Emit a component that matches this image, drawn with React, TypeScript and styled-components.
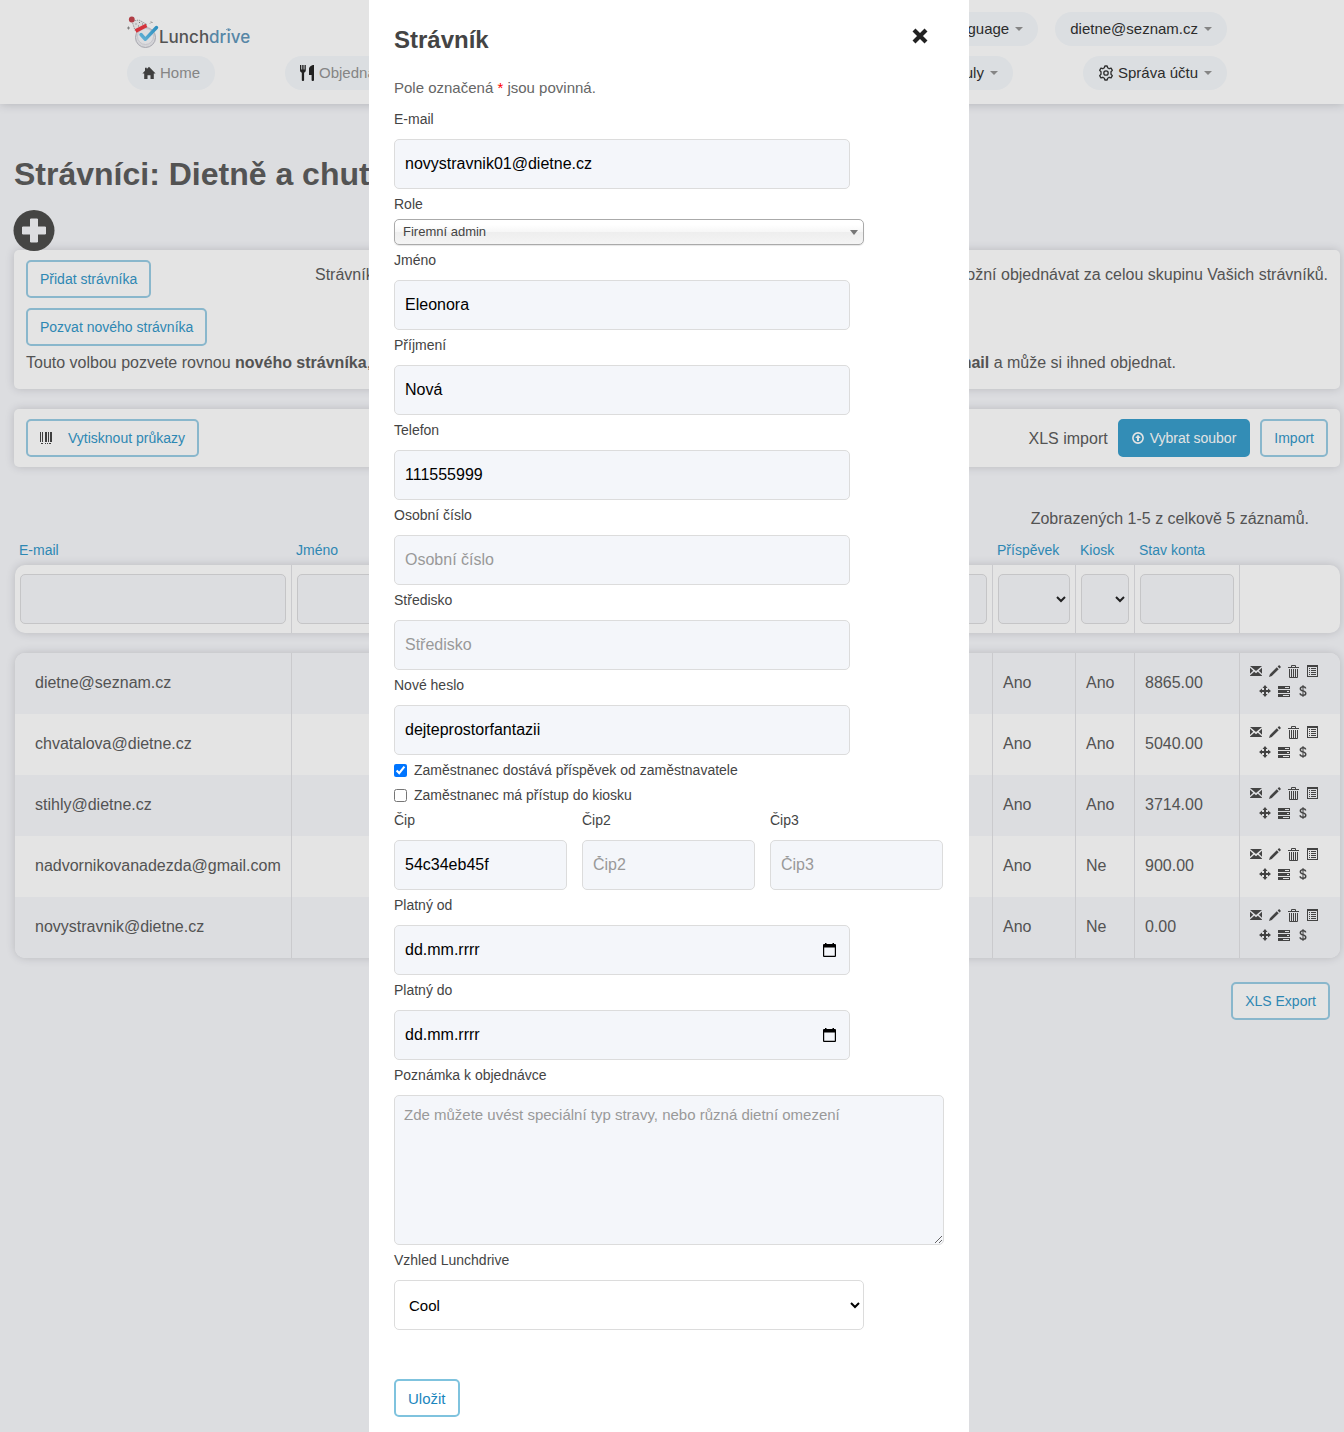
import React from "react";
import styled, { createGlobalStyle } from "styled-components";

const GlobalStyle = createGlobalStyle`
  *, *::before, *::after { box-sizing: border-box; }
  body {
    margin: 0;
    background: #f6f7fb;
    color: #5a5a5a;
    font-family: "Liberation Sans", Arial, sans-serif;
    font-size: 16px;
  }
  button, input, select, textarea { font-family: inherit; }
  h1, h2, p { margin: 0; }
`;

/* ---------- page ---------- */

const Header = styled.header`
  background: #fff;
  box-shadow: 0 0 10px rgba(0, 0, 0, 0.2);
  padding: 12px 4px 14px 14px;
`;

const HeaderInner = styled.div`
  max-width: 1100px;
  margin: 0 auto;
  display: flex;
  flex-direction: column;
  gap: 10px;
`;

const HeaderRow = styled.div<{ $gap: number }>`
  display: flex;
  height: 34px;
  gap: ${(p) => p.$gap}px;
`;

const LogoLink = styled.a`
  display: block;
  margin-right: auto;
  svg { display: block; overflow: visible; }
`;

const Pill = styled.a<{ $muted?: boolean }>`
  display: flex;
  align-items: center;
  gap: 4px;
  height: 34px;
  padding: 0 15px 1px;
  border-radius: 17px;
  background: #f5f9fc;
  color: ${(p) => (p.$muted ? "#939393" : "#2e2e2e")};
  font-size: 15px;
  white-space: nowrap;
  text-decoration: none;
`;

const Caret = styled.span`
  margin-left: 2px;
  border: 4px solid transparent;
  border-top-color: #939393;
  border-bottom: 0;
`;

const NavMiddle = styled.div`
  flex: 1;
  display: flex;
  justify-content: space-between;
`;

const Main = styled.main`
  padding: 50px 4px 40px 14px;
`;

const PageTitle = styled.h1`
  font-size: 32px;
  line-height: 40px;
  white-space: nowrap;
`;

const AddButton = styled.button`
  display: block;
  margin-top: 16px;
  padding: 0;
  border: 0;
  background: none;
  svg { display: block; overflow: visible; }
`;

const Panel = styled.section`
  background: #fff;
  border-radius: 5px;
  box-shadow: 0 0 10px rgba(0, 0, 0, 0.16);
  padding: 10px 12px;
  & + & { margin-top: 20px; }
`;

const PanelRow = styled.div`
  display: flex;
  justify-content: space-between;
  align-items: flex-start;
`;

const Stack = styled.div`
  display: flex;
  flex-direction: column;
  align-items: flex-start;
  gap: 10px;
`;

const SplitText = styled.p<{ $inset?: number }>`
  display: flex;
  flex: 1;
  justify-content: space-between;
  line-height: 30px;
  white-space: nowrap;
  padding-right: ${(p) => p.$inset ?? 0}px;
`;

const AddHint = styled(SplitText)`
  max-width: 1013px;
`;

const InviteHint = styled(SplitText)`
  padding-top: 2px;
  padding-bottom: 1px;
`;

const Button = styled.button<{ $primary?: boolean }>`
  display: inline-flex;
  align-items: center;
  gap: 6px;
  height: 38px;
  padding: 0 12px;
  border: 2px solid ${(p) => (p.$primary ? "#369dcb" : "#98cce4")};
  border-radius: 5px;
  background: ${(p) => (p.$primary ? "#369dcb" : "#fff")};
  color: ${(p) => (p.$primary ? "#fff" : "#3096c8")};
  font-size: 14px;
  white-space: nowrap;
`;

const PrintButton = styled(Button)`
  gap: 16px;
`;

const ImportGroup = styled.div`
  display: flex;
  align-items: center;
  gap: 10px;
  line-height: 22px;
  span { padding-top: 2px; }
`;

const Summary = styled.p`
  margin-top: 40px;
  padding: 1px 31px 0 0;
  text-align: right;
  line-height: 22px;
`;

const Table = styled.table`
  display: block;
  padding-left: 1px;
  tr {
    display: grid;
    grid-template-columns: 277px repeat(3, 1fr) 83px 59px 105px 100px;
  }
`;

const TableHead = styled.thead`
  display: block;
`;

const LabelCell = styled.th`
  padding: 10px 4px 5px;
  font-size: 14px;
  font-weight: normal;
  line-height: 20px;
  text-align: left;
  a { color: #3096c8; text-decoration: none; }
`;

const FilterRow = styled.tr`
  height: 68px;
  background: #fff;
  border-radius: 10px;
  box-shadow: 0 0 10px rgba(0, 0, 0, 0.16);
`;

const FilterCell = styled.td`
  padding: 9px 5px;
  border-right: 1px solid #e2e2e5;
  &:last-child { border-right: 0; }
`;

const FilterInput = styled.input`
  width: 100%;
  height: 50px;
  border: 1px solid #dcdcde;
  border-radius: 5px;
  background: #f6f7fb;
`;

const FilterSelect = styled.select`
  width: 100%;
  height: 50px;
  border: 1px solid #dcdcde;
  border-radius: 5px;
  background: #f6f7fb;
  color: #222;
  font-size: 15px;
`;

const TableBody = styled.tbody`
  display: block;
  margin-top: 20px;
  border-radius: 10px;
  overflow: hidden;
  background: #fff;
  box-shadow: 0 0 10px rgba(0, 0, 0, 0.16);
  tr:nth-child(odd) { background: #f6f7fb; }
`;

const Cell = styled.td<{ $wide?: boolean }>`
  display: flex;
  align-items: center;
  height: 61px;
  padding: 0 0 2px ${(p) => (p.$wide ? 20 : 10)}px;
  border-right: 1px solid #e2e2e5;
`;

const ActionCell = styled.td`
  display: flex;
  flex-wrap: wrap;
  justify-content: center;
  align-content: flex-start;
  column-gap: 7px;
  padding: 8px 17px 0 5px;
`;

const IconButton = styled.button`
  width: 12px;
  height: 20px;
  padding: 0;
  border: 0;
  background: none;
  color: #484848;
  display: flex;
  align-items: center;
  justify-content: center;
  svg { flex: none; display: block; }
`;

const ExportRow = styled.div`
  display: flex;
  justify-content: flex-end;
  margin-top: 24px;
  padding-right: 10px;
`;

/* ---------- dialog ---------- */

const Overlay = styled.div`
  position: fixed;
  inset: 0;
  z-index: 10;
  overflow: auto;
  display: flex;
  justify-content: center;
  align-items: flex-start;
  padding-right: 6px;
  background: rgba(30, 30, 30, 0.12);
`;

const Dialog = styled.div`
  width: 600px;
  max-width: 100%;
  min-height: 100%;
  padding: 24px 25px 15px;
  background: #fff;
  color: #444;
`;

const DialogHead = styled.div`
  display: flex;
  justify-content: space-between;
  align-items: flex-start;
  padding-right: 16px;
`;

const DialogTitle = styled.h2`
  padding-top: 1px;
  font-size: 24px;
  line-height: 30px;
`;

const CloseButton = styled.button`
  padding: 4px 0;
  border: 0;
  background: none;
  color: #222;
  svg { display: block; }
`;

const Note = styled.p`
  margin-top: 23px;
  margin-bottom: 6px;
  font-size: 15px;
  line-height: 20px;
  color: #666;
  span { color: #f00; }
`;

const Form = styled.form`
  display: flex;
  flex-direction: column;
  align-items: flex-start;
`;

const Field = styled.div<{ $width: number }>`
  width: ${(p) => p.$width}px;
  max-width: 100%;
`;

const Label = styled.label<{ $tight?: boolean }>`
  display: block;
  padding: 5px 0 ${(p) => (p.$tight ? 5 : 10)}px;
  font-size: 14px;
  line-height: 20px;
`;

const Input = styled.input`
  display: block;
  width: 100%;
  height: 50px;
  padding: 0 10px;
  border: 1px solid #dcdcdc;
  border-radius: 5px;
  background: #f4f6fa;
  color: #000;
  font-size: 16px;
  &::placeholder { color: #999; opacity: 1; }
`;

const DateInput = styled(Input)`
  &::placeholder { color: #000; }
`;

const Control = styled.div`
  position: relative;
`;

const CalendarButton = styled.button`
  position: absolute;
  top: 17px;
  right: 14px;
  padding: 0;
  border: 0;
  background: none;
  svg { display: block; }
`;

const TextArea = styled.textarea`
  display: block;
  width: 100%;
  height: 150px;
  padding: 10px 9px;
  border: 1px solid #dcdcdc;
  border-radius: 5px;
  background: #f4f6fa;
  font-size: 15px;
  &::placeholder { color: #999; opacity: 1; }
`;

const RoleSelect = styled.select`
  appearance: none;
  display: block;
  width: 100%;
  height: 26px;
  padding: 0 8px 2px;
  border: 1px solid #aaa;
  border-radius: 5px;
  background: linear-gradient(#fff 20%, #f6f6f6 50%, #eee 52%, #f4f4f4 100%);
  box-shadow: 0 1px 1px rgba(0, 0, 0, 0.1);
  color: #444;
  font-size: 13px;
`;

const RoleArrow = styled.span`
  position: absolute;
  top: 11px;
  right: 6px;
  border: 4px solid transparent;
  border-top: 5px solid #777;
  border-bottom: 0;
  pointer-events: none;
`;

const ThemeSelect = styled.select`
  display: block;
  width: 100%;
  height: 50px;
  padding: 0 10px;
  border: 1px solid #dcdcdc;
  border-radius: 5px;
  background: #fff;
  color: #000;
  font-size: 15px;
`;

const CheckRow = styled.label`
  display: flex;
  align-items: center;
  gap: 7px;
  padding-top: 5px;
  font-size: 14px;
  line-height: 20px;
  input { margin: 0; width: 13px; height: 13px; accent-color: #0075ff; }
`;

const ChipRow = styled.div`
  display: flex;
  gap: 15px;
`;

const Submit = styled(Button)`
  margin-top: 49px;
  border-color: #7fc3de;
  color: #1a86bd;
  font-size: 15px;
`;

/* ---------- drawings ---------- */

const Logo = () => (
  <svg width="122" height="34" viewBox="0 0 122 34" role="img" aria-label="Lunchdrive">
    <defs>
      <linearGradient id="tick" x1="0" y1="1" x2="1" y2="0">
        <stop offset="0" stopColor="#6cc5ee" />
        <stop offset="1" stopColor="#2f9fd6" />
      </linearGradient>
    </defs>
    <circle cx="18.5" cy="25.5" r="10" fill="#ededf1" stroke="#b9b9c2" strokeWidth="1" />
    <circle cx="18.5" cy="24.5" r="8" fill="#f7f7fa" stroke="#dcdce2" strokeWidth="1" />
    <path d="M5 9 L12 8 L20 12.5 L8 18.5 Z" fill="#f4f4f4" stroke="#8a8a8a" strokeWidth="0.8" strokeDasharray="1.4 1" />
    <path d="M8.5 12h1M12 10.500h1M11 14h1M15 12h1" stroke="#777" strokeWidth="0.9" />
    <path d="M8.600 19 L19.500 13.400" stroke="#ee3640" strokeWidth="3.8" />
    <circle cx="4.800" cy="7.500" r="2.900" fill="#c4434c" />
    <path d="M1.500 14.500v3M0 16h3M24 9.500l1.500 1.500M23 11.500l1-1" stroke="#8d8d8d" strokeWidth="1" />
    <path d="M14 22.500 L18.300 27.300 L29.500 15.500" fill="none" stroke="url(#tick)" strokeWidth="3.400" strokeLinecap="round" strokeLinejoin="round" />
    <text x="32" y="31" fontFamily="Inter, sans-serif" fontSize="17" fontWeight="500" fill="#5a5a5a">
      Lunch<tspan fill="#5e95b9">drive</tspan>
    </text>
    <path d="M99 17.800q2.500-2.500 5 0" fill="none" stroke="#7fb0cf" strokeWidth="1" />
  </svg>
);

const HomeIcon = () => (
  <svg width="14" height="14" viewBox="0 0 14 14" fill="#444">
    <path d="M7 .8 13.600 7.400H11.800V13H8.500V9.200H5.500V13H2.200V7.400H.4L3 4.800V1.800H4.800V3Z" />
  </svg>
);

const CutleryIcon = () => (
  <svg width="15" height="16" viewBox="0 0 15 16" fill="#222">
    <path d="M0 0h1.300v4.500h.9V0h1.400v4.500h.9V0h1.300v5.200c0 1.300-.8 2.100-1.700 2.500V15c0 1.300-2.300 1.300-2.300 0V7.700C.8 7.300 0 6.500 0 5.200ZM14 0v15c0 1.300-2.400 1.300-2.400 0v-5H9V4c0-2.300 2.400-4 5-4Z" />
  </svg>
);

const GearIcon = () => (
  <svg width="16" height="16" viewBox="0 0 24 24" fill="none" stroke="#333" strokeWidth="2" strokeLinejoin="round">
    <path d="M9.500 4.200 10.300 1.500h3.400l.8 2.700 2.300 1.400 2.800-.8 1.900 3.200-2 2.200v3.600l2 2.200-1.900 3.200-2.800-.8-2.300 1.400-.8 2.700h-3.400l-.8-2.700-2.300-1.400-2.800.8L2.500 16l2-2.200v-3.600l-2-2.200 1.900-3.200 2.800.8Z" />
    <circle cx="12" cy="12" r="3.300" />
  </svg>
);

const PlusIcon = () => (
  <svg width="40" height="40" viewBox="0 0 40 40">
    <circle cx="20" cy="20.500" r="20.500" fill="#4b4b49" />
    <path d="M16.500 9h7v8h8v7h-8v8h-7v-8h-8v-7h8Z" fill="#f6f7fb" stroke="#f6f7fb" strokeLinejoin="round" />
  </svg>
);

const BarcodeIcon = () => (
  <svg width="12" height="12" viewBox="0 0 12 12" fill="#444" shapeRendering="crispEdges">
    <path d="M0 0h1v10H0ZM2 0h1v10H2ZM5 0h2v10H5ZM8 0h1v10H8ZM10 0h2v10h-2ZM1 11h2v1H1ZM5 11h1v1H5ZM7 11h1v1H7ZM9 11h2v1H9Z" />
  </svg>
);

const UploadIcon = () => (
  <svg width="12" height="12" viewBox="0 0 12 12">
    <circle cx="6" cy="6" r="5.100" fill="none" stroke="#fff" strokeWidth="1.600" />
    <path d="M6 2.800 8.800 6H7v3H5V6H3.200Z" fill="#fff" />
  </svg>
);

const CloseIcon = () => (
  <svg width="16" height="16" viewBox="0 0 16 16" fill="none" stroke="currentColor" strokeWidth="4.200">
    <path d="M2 2 14 14M14 2 2 14" />
  </svg>
);

const CalendarIcon = () => (
  <svg width="13" height="15" viewBox="0 0 13 15" fill="#000">
    <path d="M2 1h1.500v1H9.500V1H11v1h1a1 1 0 0 1 1 1V14a1 1 0 0 1-1 1H1a1 1 0 0 1-1-1V3a1 1 0 0 1 1-1h1ZM1.200 5.500v8.300h10.600V5.500Z" fillRule="evenodd" />
  </svg>
);

const actionIcons: { label: string; icon: React.ReactNode }[] = [
  {
    label: "Poslat e-mail",
    icon: (
      <svg width="12" height="10" viewBox="0 0 12 10" fill="currentColor">
        <path d="M0 0h12L6 5ZM0 1.800 3.200 4.700 0 7.800ZM12 1.800V7.800L8.800 4.700ZM0 10V9.500L4.200 5.700 6 7.200 7.800 5.700 12 9.500V10Z" />
      </svg>
    ),
  },
  {
    label: "Upravit",
    icon: (
      <svg width="12" height="12" viewBox="0 0 12 12" fill="currentColor">
        <path d="M0 12 .9 9.200 7.800 2.300 9.700 4.200 2.800 11.100ZM8.600 1.500 10.100 0 12 1.900 10.500 3.400Z" />
      </svg>
    ),
  },
  {
    label: "Smazat",
    icon: (
      <svg width="12" height="13" viewBox="0 0 12 13" fill="none" stroke="currentColor">
        <path d="M0 2.500h11M3.500 2V.5h4V2" />
        <path d="M1.500 4v8.500h8V4M3.500 4v8M5.500 4v8M7.500 4v8" />
      </svg>
    ),
  },
  {
    label: "Detail",
    icon: (
      <svg width="12" height="12" viewBox="0 0 12 12" fill="currentColor" shapeRendering="crispEdges">
        <path d="M0 0h11v12H0ZM1 2v9h9V2Z" fillRule="evenodd" />
        <path d="M2 3h1v1H2ZM4 3h5v1H4ZM2 5h1v1H2ZM4 5h5v1H4ZM2 7h1v1H2ZM4 7h5v1H4ZM2 9h1v1H2ZM4 9h5v1H4Z" />
      </svg>
    ),
  },
  {
    label: "Přesunout",
    icon: (
      <svg width="12" height="12" viewBox="0 0 12 12" fill="currentColor">
        <path d="M6 0 8.500 3H7v2h2V3.500L12 6 9 8.500V7H7v2h1.500L6 12 3.500 9H5V7H3v1.500L0 6 3 3.500V5h2V3H3.500Z" />
      </svg>
    ),
  },
  {
    label: "Historie",
    icon: (
      <svg width="12" height="11" viewBox="0 0 12 11" fill="currentColor" shapeRendering="crispEdges">
        <path d="M0 0h12v3H0ZM7 1v1h4V1ZM0 4h12v3H0ZM9 5v1h2V5ZM0 8h12v3H0ZM5 9v1h6V9Z" fillRule="evenodd" />
      </svg>
    ),
  },
  {
    label: "Platby",
    icon: (
      <svg width="8" height="12" viewBox="0 0 8 12" fill="none" stroke="currentColor" strokeWidth="1.400">
        <path d="M6.600 3.600C6.600 2.400 5.500 1.800 4 1.800S1.300 2.500 1.300 3.700 2.300 5.500 4 5.900 6.800 7 6.800 8.400 5.600 10.200 4 10.200 1.100 9.500 1.100 8.200" />
        <path d="M4 0v12" strokeWidth="1" />
      </svg>
    ),
  },
];

/* ---------- data ---------- */

const diners = [
  { email: "dietne@seznam.cz", allowance: "Ano", kiosk: "Ano", balance: "8865.00" },
  { email: "chvatalova@dietne.cz", allowance: "Ano", kiosk: "Ano", balance: "5040.00" },
  { email: "stihly@dietne.cz", allowance: "Ano", kiosk: "Ano", balance: "3714.00" },
  { email: "nadvornikovanadezda@gmail.com", allowance: "Ano", kiosk: "Ne", balance: "900.00" },
  { email: "novystravnik@dietne.cz", allowance: "Ano", kiosk: "Ne", balance: "0.00" },
];

const columns: { title: string; filter: "text" | "select" | "none" }[] = [
  { title: "E-mail", filter: "text" },
  { title: "Jméno", filter: "text" },
  { title: "Příjmení", filter: "text" },
  { title: "Telefon", filter: "text" },
  { title: "Příspěvek", filter: "select" },
  { title: "Kiosk", filter: "select" },
  { title: "Stav konta", filter: "text" },
  { title: "", filter: "none" },
];

type TextFieldProps = {
  id: string;
  label: string;
  value?: string;
  type?: string;
  width?: number;
};

const TextField = ({ id, label, value, type = "text", width = 456 }: TextFieldProps) => (
  <Field $width={width}>
    <Label htmlFor={id}>{label}</Label>
    <Input id={id} type={type} defaultValue={value} placeholder={label} />
  </Field>
);

const DateField = ({ id, label }: { id: string; label: string }) => (
  <Field $width={456}>
    <Label htmlFor={id}>{label}</Label>
    <Control>
      <DateInput id={id} placeholder="dd.mm.rrrr" />
      <CalendarButton type="button" aria-label={`${label}: kalendář`}>
        <CalendarIcon />
      </CalendarButton>
    </Control>
  </Field>
);

const SiteHeader = () => (
  <Header>
    <HeaderInner>
      <HeaderRow $gap={17}>
        <LogoLink href="#"><Logo /></LogoLink>
        <Pill href="#">Language <Caret /></Pill>
        <Pill href="#">dietne@seznam.cz <Caret /></Pill>
      </HeaderRow>
      <HeaderRow as="nav" $gap={70}>
        <Pill href="#" $muted><HomeIcon />Home</Pill>
        <NavMiddle>
          <Pill href="#" $muted><CutleryIcon />Objednávky</Pill>
          <Pill href="#">Moduly <Caret /></Pill>
        </NavMiddle>
        <Pill href="#"><GearIcon />Správa účtu <Caret /></Pill>
      </HeaderRow>
    </HeaderInner>
  </Header>
);

const DinersTable = () => (
  <Table>
    <TableHead>
      <tr>
        {columns.map((c) => (
          <LabelCell key={c.title} scope="col">{c.title && <a href="#">{c.title}</a>}</LabelCell>
        ))}
      </tr>
      <FilterRow>
        {columns.map((c) => (
          <FilterCell key={c.title}>
            {c.filter === "text" && <FilterInput aria-label={c.title} />}
            {c.filter === "select" && (
              <FilterSelect aria-label={c.title} defaultValue="">
                <option value=""></option>
                <option>Ano</option>
                <option>Ne</option>
              </FilterSelect>
            )}
          </FilterCell>
        ))}
      </FilterRow>
    </TableHead>
    <TableBody>
      {diners.map((d) => (
        <tr key={d.email}>
          <Cell $wide>{d.email}</Cell>
          <Cell />
          <Cell />
          <Cell />
          <Cell>{d.allowance}</Cell>
          <Cell>{d.kiosk}</Cell>
          <Cell>{d.balance}</Cell>
          <ActionCell>
            {actionIcons.map((a) => (
              <IconButton key={a.label} type="button" aria-label={a.label}>{a.icon}</IconButton>
            ))}
          </ActionCell>
        </tr>
      ))}
    </TableBody>
  </Table>
);

const DinerDialog = () => (
  <Overlay>
    <Dialog role="dialog" aria-modal="true" aria-labelledby="dialog-title">
      <DialogHead>
        <DialogTitle id="dialog-title">Strávník</DialogTitle>
        <CloseButton type="button" aria-label="Zavřít"><CloseIcon /></CloseButton>
      </DialogHead>
      <Note>Pole označená <span>*</span> jsou povinná.</Note>
      <Form>
        <TextField id="email" label="E-mail" value="novystravnik01@dietne.cz" />
        <Field $width={470}>
          <Label htmlFor="role" $tight>Role</Label>
          <Control>
            <RoleSelect id="role"><option>Firemní admin</option></RoleSelect>
            <RoleArrow />
          </Control>
        </Field>
        <TextField id="first" label="Jméno" value="Eleonora" />
        <TextField id="last" label="Příjmení" value="Nová" />
        <TextField id="phone" label="Telefon" value="111555999" />
        <TextField id="number" label="Osobní číslo" />
        <TextField id="center" label="Středisko" />
        <TextField id="password" label="Nové heslo" value="dejteprostorfantazii" />
        <CheckRow>
          <input type="checkbox" defaultChecked />
          Zaměstnanec dostává příspěvek od zaměstnavatele
        </CheckRow>
        <CheckRow>
          <input type="checkbox" />
          Zaměstnanec má přístup do kiosku
        </CheckRow>
        <ChipRow>
          <TextField id="chip1" label="Čip" value="54c34eb45f" width={173} />
          <TextField id="chip2" label="Čip2" width={173} />
          <TextField id="chip3" label="Čip3" width={173} />
        </ChipRow>
        <DateField id="from" label="Platný od" />
        <DateField id="to" label="Platný do" />
        <Field $width={550}>
          <Label htmlFor="note">Poznámka k objednávce</Label>
          <TextArea id="note" placeholder="Zde můžete uvést speciální typ stravy, nebo různá dietní omezení" />
        </Field>
        <Field $width={470}>
          <Label htmlFor="theme">Vzhled Lunchdrive</Label>
          <ThemeSelect id="theme"><option>Cool</option></ThemeSelect>
        </Field>
        <Submit type="submit">Uložit</Submit>
      </Form>
    </Dialog>
  </Overlay>
);

export default function App() {
  return (
    <>
      <GlobalStyle />
      <SiteHeader />
      <Main>
        <PageTitle>Strávníci: Dietně a chutně</PageTitle>
        <AddButton type="button" aria-label="Přidat"><PlusIcon /></AddButton>
        <Panel>
          <PanelRow>
            <Stack>
              <Button type="button">Přidat strávníka</Button>
              <Button type="button">Pozvat nového strávníka</Button>
            </Stack>
            <AddHint>
              <span>Strávníka</span>
              <span>umožní objednávat za celou skupinu Vašich strávníků.</span>
            </AddHint>
          </PanelRow>
          <InviteHint $inset={152}>
            <span>Touto volbou pozvete rovnou <b>nového strávníka</b>,</span>
            <span><b>e-mail</b> a může si ihned objednat.</span>
          </InviteHint>
        </Panel>
        <Panel>
          <PanelRow>
            <PrintButton type="button"><BarcodeIcon />Vytisknout průkazy</PrintButton>
            <ImportGroup>
              <span>XLS import</span>
              <Button type="button" $primary><UploadIcon />Vybrat soubor</Button>
              <Button type="button">Import</Button>
            </ImportGroup>
          </PanelRow>
        </Panel>
        <Summary>Zobrazených 1-5 z celkově 5 záznamů.</Summary>
        <DinersTable />
        <ExportRow><Button type="button">XLS Export</Button></ExportRow>
      </Main>
      <DinerDialog />
    </>
  );
}
